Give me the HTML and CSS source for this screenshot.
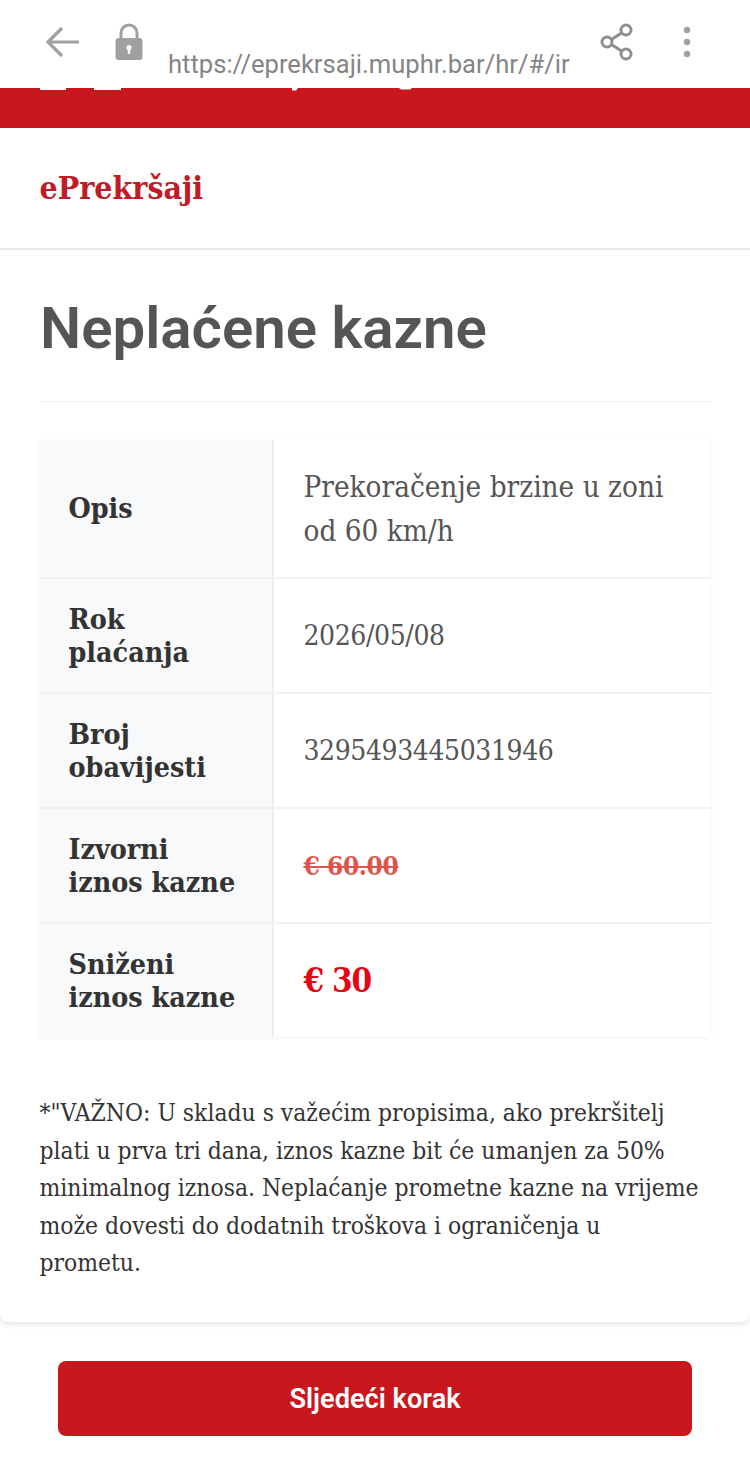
FILE: index.html
```html
<!DOCTYPE html>
<html lang="hr">
<head>
<meta charset="utf-8">
<title>ePrekršaji</title>
<link rel="stylesheet" href="styles.css">
</head>
<body>
<div class="toolbar">
  <svg class="ic-back" viewBox="0 0 36 32" width="36" height="32"><path d="M34 16H4M17 2 3 16l14 14" fill="none" stroke="#a0a0a2" stroke-width="3.200"/></svg>
  <svg class="ic-lock" viewBox="0 0 30 38" width="30" height="38"><path d="M7 17V10a8 8 0 0 1 16 0v7" fill="none" stroke="#a0a0a2" stroke-width="3"/><rect x="1.500" y="15" width="27" height="22" rx="3" fill="#a0a0a2"/><circle cx="15" cy="24.500" r="2.600" fill="#fff"/><rect x="13.800" y="25" width="2.400" height="6" fill="#fff"/></svg>
  <div class="url">https://eprekrsaji.muphr.bar/hr/#/ir</div>
  <svg class="ic-share" viewBox="0 0 34 38" width="34" height="38"><g fill="none" stroke="#8f8f91" stroke-width="3"><circle cx="26" cy="7" r="5"/><circle cx="7" cy="19" r="5"/><circle cx="26" cy="31" r="5"/><path d="M11.500 16.500 21.500 10M11.500 21.500 21.500 28"/></g></svg>
  <svg class="ic-more" viewBox="0 0 8 32" width="8" height="32"><circle cx="4" cy="4" r="3.200" fill="#a0a0a2"/><circle cx="4" cy="16" r="3.200" fill="#a0a0a2"/><circle cx="4" cy="28" r="3.200" fill="#a0a0a2"/></svg>
</div>
<div class="redbar">
  <svg class="peek" viewBox="0 0 750 3" width="750" height="3"><g fill="#fff"><rect x="40" width="26" height="2"/><rect x="94" width="27" height="2"/><path d="M292 0h6l-2 2.500h-4zM399 0h13l-2 1.500h-9z"/></g></svg>
</div>
<main class="card">
  <header class="brand">ePrekršaji</header>
  <section class="content">
    <h1 class="title">Neplaćene kazne</h1>
    <div class="table">
      <div class="row row-first"><div class="key">Opis</div><div class="val val-desc">Prekoračenje brzine u zoni od 60 km/h</div></div>
      <div class="row"><div class="key">Rok<br>plaćanja</div><div class="val val-num">2026/05/08</div></div>
      <div class="row"><div class="key">Broj<br>obavijesti</div><div class="val val-num">3295493445031946</div></div>
      <div class="row"><div class="key">Izvorni<br>iznos kazne</div><div class="val val-old"><span class="old">€ 60.00</span></div></div>
      <div class="row row-last"><div class="key">Sniženi<br>iznos kazne</div><div class="val"><span class="new">€ 30</span></div></div>
    </div>
    <p class="note">*"VAŽNO: U skladu s važećim propisima, ako prekršitelj plati u prva tri dana, iznos kazne bit će umanjen za 50% minimalnog iznosa. Neplaćanje prometne kazne na vrijeme može dovesti do dodatnih troškova i ograničenja u<br>prometu.</p>
  </section>
</main>
<div class="actions"><button class="next" type="button">Sljedeći korak</button></div>
</body>
</html>
```
FILE: styles.css
```css
* { box-sizing: border-box; }
html, body { margin: 0; padding: 0; background: #fff; }
body { width: 750px; height: 1472px; overflow: hidden; font-family: "DejaVu Serif Condensed", "DejaVu Serif", serif; font-stretch: condensed; color: #333; }
.toolbar { position: relative; height: 88px; background: #fff; }
.ic-back { position: absolute; left: 45px; top: 26px; }
.ic-lock { position: absolute; left: 114px; top: 23px; }
.ic-share { position: absolute; left: 600px; top: 23px; }
.ic-more { position: absolute; left: 683px; top: 26px; }
.url { position: absolute; left: 168px; top: 49px; font: 400 25.600px/30px Roboto, sans-serif; color: #858585; white-space: nowrap; }
.redbar { height: 40px; background: #c9171e; }
.peek { display: block; }
.card { height: 1194px; border-radius: 0 0 8px 8px; box-shadow: 0 2px 6px rgba(0,0,0,.12); background: #fff; }
.brand { height: 122px; padding-top: 40px; padding-left: 39.500px; font-size: 31.800px; line-height: 40px; font-weight: 700; color: #c01c28; border-bottom: 2px solid #e8e8e8; }
.content { padding: 0 39px 0 40px; }
.title { margin: 0; height: 152px; padding-top: 43px; font: 600 58.200px/70px Roboto, sans-serif; color: #555; border-bottom: 1px solid #eee; }
.table { margin-top: 38px; box-shadow: 0 1px 4px rgba(0,0,0,.06); }
.row { display: flex; height: 115px; border-bottom: 2px solid #f1f2f4; }
.row-first { height: 139px; }
.row-last { height: 113px; border-bottom: 0; }
.key { width: 234px; padding: 1px 10px 0 28.500px; display: flex; align-items: center; background: #f8f9fb; border-right: 2px solid #eceef1; font-size: 28.400px; line-height: 33px; font-weight: 700; color: #333; }
.val { flex: 1; padding: 1px 30px 0 29.500px; display: flex; align-items: center; font-size: 28px; line-height: 44px; color: #555; }
.val-desc { font-size: 29.400px; }
.val-num { letter-spacing: -0.400px; }
.val-old { padding-top: 0; }
.old { font-size: 26px; letter-spacing: -0.400px; font-weight: 700; color: #e0534a; text-decoration: line-through; }
.new { font-size: 33px; letter-spacing: -1.200px; font-weight: 700; color: #e30613; }
.row-first .key, .row-last .key, .row-last .val { padding-top: 0; }
.note { margin: 57px 0 0 -0.500px; font-size: 24.400px; line-height: 37.500px; color: #333; }
.actions { padding: 39px 58px 0; }
.next { display: block; width: 634px; height: 75px; border: 0; border-radius: 8px; background: #c9171e; color: #fff; font: 600 27.200px/30px Roboto, sans-serif; }
```
